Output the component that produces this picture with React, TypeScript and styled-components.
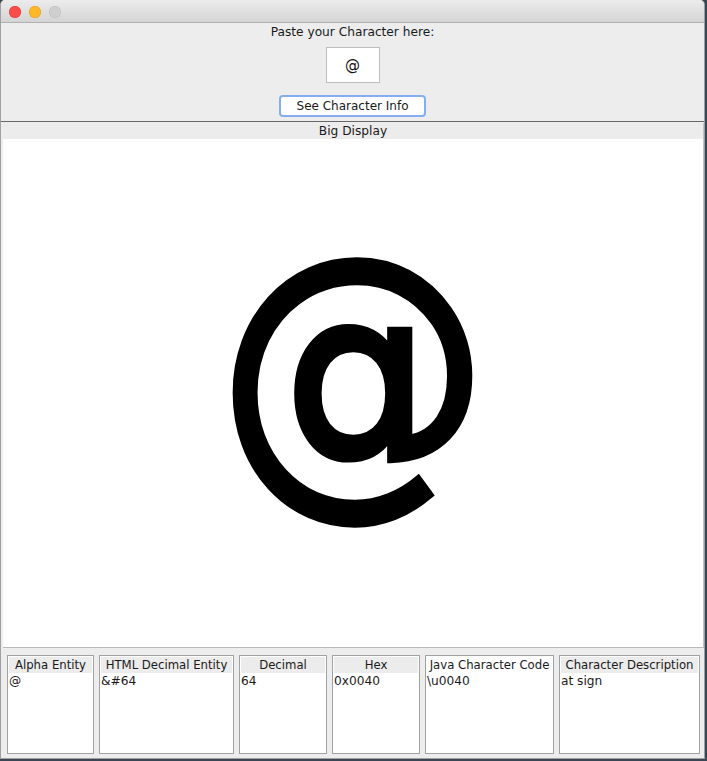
import React, { useState } from 'react'
import styled, { createGlobalStyle } from 'styled-components'

type Column = {
    title: string
    value: string
    width: number
    plainHeader?: boolean
}

const columns: Column[] = [
    { title: 'Alpha Entity', value: '@', width: 87 },
    { title: 'HTML Decimal Entity', value: '&#64', width: 135 },
    { title: 'Decimal', value: '64', width: 88 },
    { title: 'Hex', value: '0x0040', width: 88 },
    { title: 'Java Character Code', value: '\\u0040', width: 129, plainHeader: true },
    { title: 'Character Description', value: 'at sign', width: 141 },
]

const App: React.FC = () => {
    const [char, setChar] = useState('@')
    const [shown, setShown] = useState('@')

    return (
        <>
            <GlobalStyle />
            <Desktop>
                <Window>
                    <TitleBar>
                        <Light color="#fc4a4b" border="#de3a3b" />
                        <Light color="#fdb828" border="#dd9d1d" />
                        <Light color="#cfcfcf" border="#bdbdbd" />
                    </TitleBar>
                    <InputArea>
                        <Prompt>Paste your Character here:</Prompt>
                        <CharInput value={char} onChange={(e) => setChar(e.target.value)} />
                        <InfoButton onClick={() => setShown(char)}>See Character Info</InfoButton>
                    </InputArea>
                    <DisplayPanel>
                        <PanelHeader>Big Display</PanelHeader>
                        <BigChar>
                            <BigGlyph>{shown}</BigGlyph>
                        </BigChar>
                    </DisplayPanel>
                    <InfoRow>
                        {columns.map((c) => (
                            <InfoBox key={c.title} $width={c.width}>
                                <BoxHeader $plain={c.plainHeader}>{c.title}</BoxHeader>
                                <BoxValue>{c.value}</BoxValue>
                            </InfoBox>
                        ))}
                    </InfoRow>
                </Window>
            </Desktop>
        </>
    )
}

export default App

const GlobalStyle = createGlobalStyle`
    html, body {
        margin: 0;
        padding: 0;
        background: #2c3a48;
    }
    body {
        font-family: 'DejaVu Sans', 'Noto Sans', sans-serif;
        font-size: 12.2px;
        color: #1a1a1a;
    }
`

const Desktop = styled.div`
    width: 707px;
    height: 761px;
    background: #3a4653;
    overflow: hidden;
`

const Window = styled.div`
    width: 705px;
    height: 759px;
    box-sizing: border-box;
    background: #ededed;
    display: flex;
    flex-direction: column;
    border: 1px solid #a0a0a0;
    border-top: none;
    border-radius: 5px 5px 0 0;
    overflow: hidden;
`

const TitleBar = styled.div`
    height: 23px;
    flex: none;
    display: flex;
    align-items: center;
    gap: 8px;
    padding: 1px 0 0 8px;
    background: linear-gradient(#ececec, #d4d4d4);
    border-bottom: 1px solid #b1b1b1;
    box-sizing: border-box;
`

const Light = styled.span<{ color: string; border: string }>`
    width: 12px;
    height: 12px;
    border-radius: 50%;
    background: ${(p) => p.color};
    box-shadow: inset 0 0 0 0.5px ${(p) => p.border};
`

const InputArea = styled.div`
    display: flex;
    flex-direction: column;
    align-items: center;
    height: 99px;
    flex: none;
    box-sizing: border-box;
    border-bottom: 1px solid #666;
`

const Prompt = styled.div`
    line-height: 18px;
    height: 18px;
`

const CharInput = styled.input`
    margin-top: 6px;
    width: 54px;
    height: 36px;
    box-sizing: border-box;
    border: 1px solid #bdbdbd;
    background: #fff;
    text-align: center;
    font-family: 'DejaVu Sans', sans-serif;
    font-size: 15px;
    color: #111;
    outline: none;
    padding: 0;
`

const InfoButton = styled.button`
    margin-top: 12px;
    width: 147px;
    height: 22px;
    box-sizing: border-box;
    border: 2px solid #86adef;
    border-radius: 4px;
    background: #fff;
    font-family: 'DejaVu Sans', sans-serif;
    font-size: 12px;
    color: #1a1a1a;
    padding: 0;
    line-height: 16px;
`

const DisplayPanel = styled.div`
    margin: 1px 0 0 2px;
    height: 525px;
    flex: none;
    display: flex;
    flex-direction: column;
    background: #fff;
    border-right: 1px solid #c4c4c4;
    border-bottom: 1px solid #b8b8b8;
    box-sizing: border-box;
`

const PanelHeader = styled.div`
    height: 16px;
    line-height: 16px;
    background: #ececec;
    text-align: center;
    flex: none;
`

const BigChar = styled.div`
    flex: 1;
    display: flex;
    align-items: center;
    justify-content: center;
    padding-bottom: 48px;
    overflow: hidden;
`

const BigGlyph = styled.span`
    display: inline-block;
    font-family: 'DejaVu Sans', sans-serif;
    font-size: 300px;
    line-height: 1;
    color: #000;
    -webkit-text-stroke: 7px #000;
    transform: scaleX(0.9);
`

const InfoRow = styled.div`
    display: flex;
    gap: 5px;
    padding: 7px 0 0 6px;
    flex: 1;
    background: #ededed;
`

const InfoBox = styled.div<{ $width: number }>`
    width: ${(p) => p.$width}px;
    height: 99px;
    flex: none;
    box-sizing: border-box;
    border: 1px solid #a2a2a2;
    background: #fff;
    padding: 1px;
    display: flex;
    flex-direction: column;
`

const BoxHeader = styled.div<{ $plain?: boolean }>`
    height: 16px;
    line-height: 16px;
    font-size: 11.7px;
    background: ${(p) => (p.$plain ? '#fff' : '#ececec')};
    text-align: center;
    white-space: nowrap;
`

const BoxValue = styled.div`
    line-height: 16px;
    white-space: nowrap;
`
